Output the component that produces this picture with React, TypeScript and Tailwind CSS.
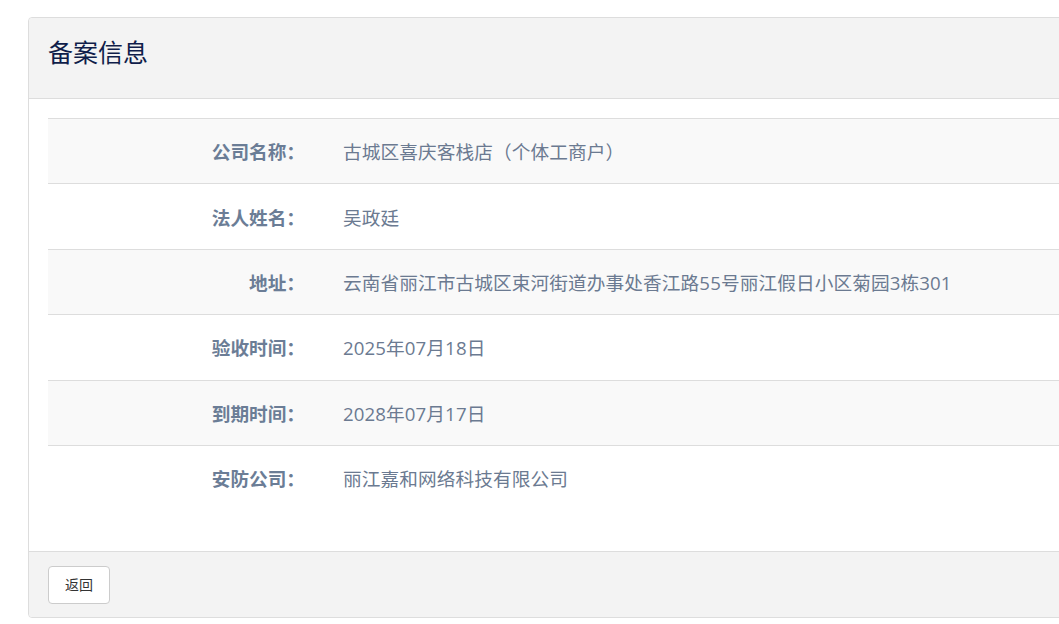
import React from "react";

const rows: [string, string][] = [
  ["公司名称：", "古城区喜庆客栈店（个体工商户）"],
  ["法人姓名：", "吴政廷"],
  ["地址：", "云南省丽江市古城区束河街道办事处香江路55号丽江假日小区菊园3栋301"],
  ["验收时间：", "2025年07月18日"],
  ["到期时间：", "2028年07月17日"],
  ["安防公司：", "丽江嘉和网络科技有限公司"],
];

export default function App() {
  return (
    <div
      className="w-[1059px] h-[624px] bg-white overflow-hidden pt-[17px] pl-[28px]"
      style={{ fontFamily: '"Open Sans", "Noto Sans CJK SC", sans-serif' }}
    >
      <div className="w-[1100px] border border-[#dddddd] rounded-[4px] bg-white">
        <div className="h-[81px] bg-[#f3f3f3] border-b border-[#dddddd] rounded-t-[4px] flex items-center pl-[19px] pb-[12px]">
          <h1 className="text-[25px] text-[#0f1d4a] font-normal leading-none">备案信息</h1>
        </div>
        <div className="px-[19px] pt-[19px] pb-[41px]">
          <div className="flex flex-col">
            {rows.map(([k, v], i) => (
              <div
                key={i}
                className={`flex items-center h-[65.4px] pt-[2px] border-t border-[#dddddd] ${
                  i % 2 === 0 ? "bg-[#f9f9f9]" : "bg-white"
                }`}
              >
                <div className="w-[272px] pr-[15px] text-right text-[18.67px] font-bold text-[#6b7d96]">
                  {k}
                </div>
                <div className="pl-[23px] text-[18.67px] text-[#6b7a91] tracking-[0.1px]">{v}</div>
              </div>
            ))}
          </div>
        </div>
        <div className="h-[66px] bg-[#f3f3f3] border-t border-[#dddddd] rounded-b-[4px] flex items-center pl-[19px]">
          <button className="h-[38px] w-[62px] bg-white border border-[#cccccc] rounded-[4px] text-[14px] text-[#333333]">
            返回
          </button>
        </div>
      </div>
    </div>
  );
}
